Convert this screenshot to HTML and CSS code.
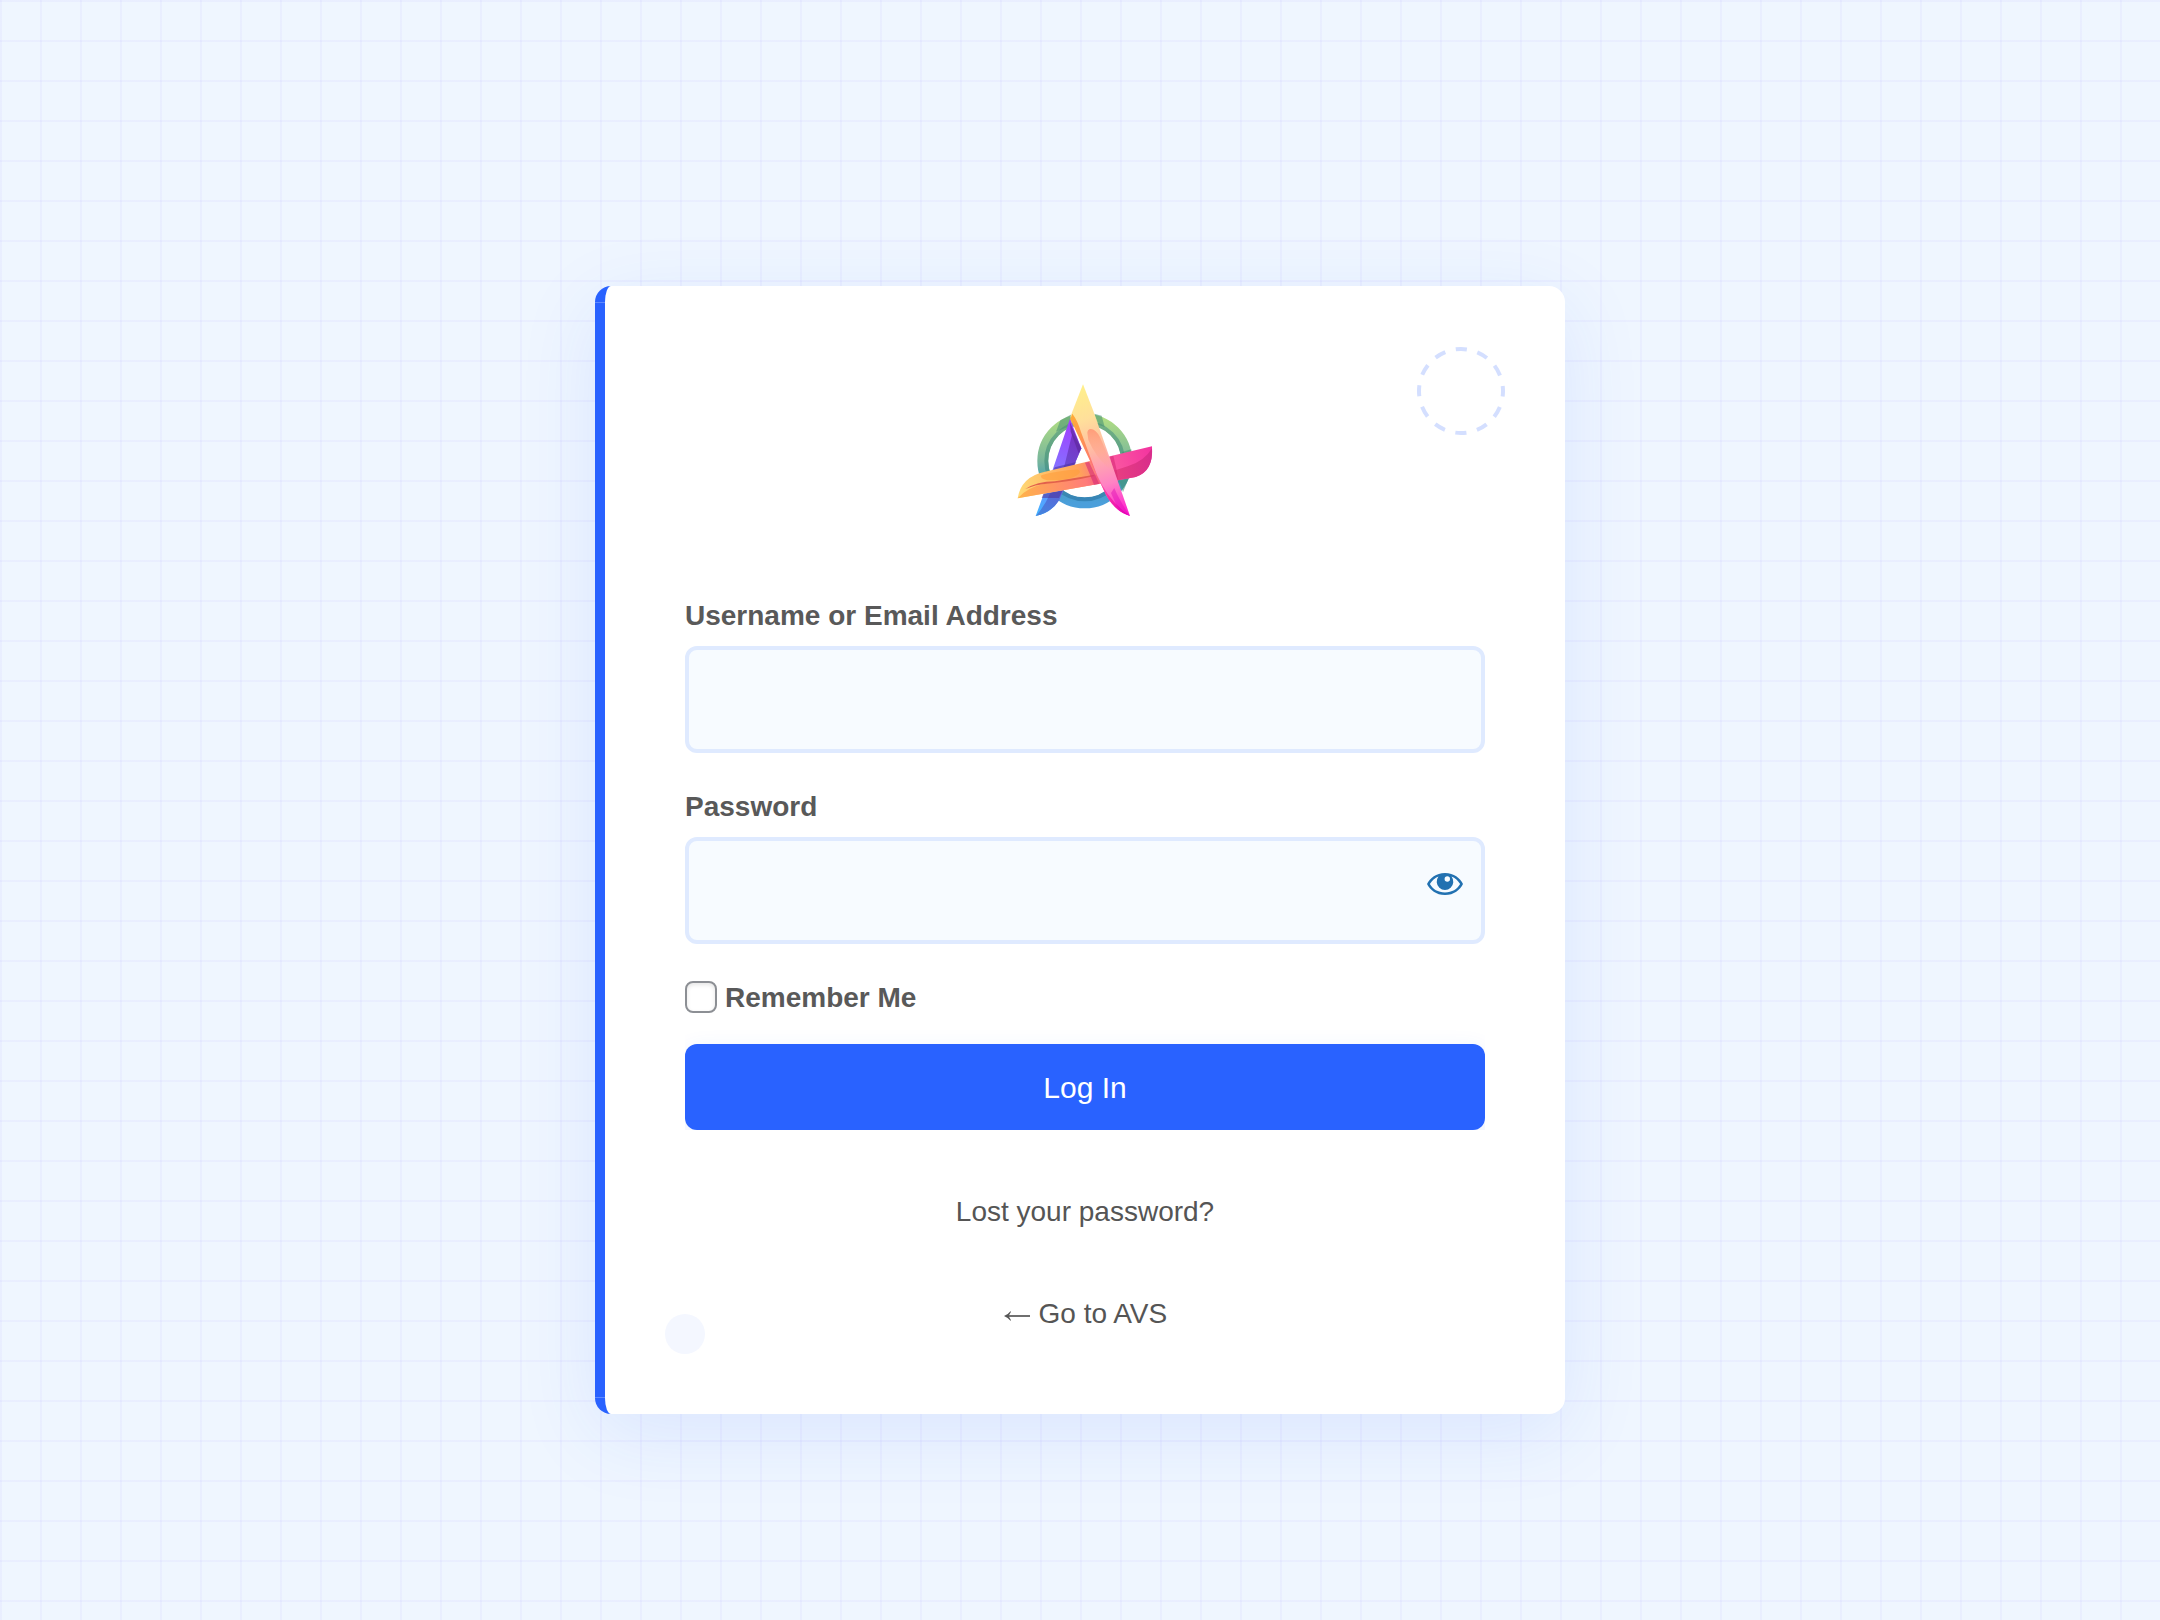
FILE: index.html
```html
<!DOCTYPE html>
<html lang="en">
<head>
<meta charset="utf-8">
<title>Log In</title>
<link rel="stylesheet" href="styles.css">
</head>
<body>
<main class="card">
  <span class="ring"><svg width="92" height="92" viewBox="0 0 92 92"><circle cx="46" cy="46" r="42" fill="none" stroke="#d4dfff" stroke-width="4" stroke-dasharray="11.2 10.791" stroke-dashoffset="5.6"/></svg></span>
  <span class="dot"></span>
  <h1 class="logo">
    <svg width="170" height="160" viewBox="0 0 510 480" role="img" aria-label="AVS">
      <defs>
        <linearGradient id="ring" x1="0" y1="0" x2="0" y2="1"><stop offset="0" stop-color="#afdc83"/><stop offset=".5" stop-color="#78b69c"/><stop offset=".75" stop-color="#439daf"/><stop offset="1" stop-color="#4b9fdb"/></linearGradient>
        <linearGradient id="ringDark" x1="0" y1="0" x2="0" y2="1"><stop offset="0" stop-color="#75b184"/><stop offset=".5" stop-color="#559d85"/><stop offset="1" stop-color="#3685b8"/></linearGradient>
        <linearGradient id="violet" gradientUnits="userSpaceOnUse" x1="215" y1="150" x2="120" y2="430"><stop offset="0" stop-color="#a33cff"/><stop offset=".5" stop-color="#8570ff"/><stop offset="1" stop-color="#44b3ff"/></linearGradient>
        <linearGradient id="violetDark" gradientUnits="userSpaceOnUse" x1="240" y1="190" x2="120" y2="430"><stop offset="0" stop-color="#7b2fc4"/><stop offset=".45" stop-color="#6a4ed2"/><stop offset="1" stop-color="#4583df"/></linearGradient>
        <linearGradient id="bar" gradientUnits="userSpaceOnUse" x1="60" y1="350" x2="455" y2="250"><stop offset="0" stop-color="#ffd875"/><stop offset=".45" stop-color="#ffa35a"/><stop offset=".7" stop-color="#fa57a0"/><stop offset="1" stop-color="#f334a0"/></linearGradient>
        <linearGradient id="barDark" gradientUnits="userSpaceOnUse" x1="55" y1="370" x2="455" y2="280"><stop offset="0" stop-color="#ffb34a"/><stop offset=".5" stop-color="#ff7c79"/><stop offset=".75" stop-color="#e63d82"/><stop offset="1" stop-color="#d92d8b"/></linearGradient>
        <linearGradient id="leg" gradientUnits="userSpaceOnUse" x1="245" y1="45" x2="380" y2="430"><stop offset="0" stop-color="#fff08a"/><stop offset=".25" stop-color="#ffdf9b"/><stop offset=".5" stop-color="#ffb7a5"/><stop offset=".75" stop-color="#ff83c4"/><stop offset="1" stop-color="#ff20d0"/></linearGradient>
        <linearGradient id="legDark" gradientUnits="userSpaceOnUse" x1="220" y1="140" x2="385" y2="437"><stop offset="0" stop-color="#ffaa39"/><stop offset=".4" stop-color="#ff7d69"/><stop offset=".7" stop-color="#fb3ea7"/><stop offset="1" stop-color="#e800b5"/></linearGradient>
        <linearGradient id="flare" x1="0" y1="0" x2="0" y2="1"><stop offset="0" stop-color="#ff9d79"/><stop offset="1" stop-color="#ffa493" stop-opacity="0"/></linearGradient>
      </defs>
      <circle cx="254" cy="273" r="126" fill="none" stroke="url(#ring)" stroke-width="32"/>
      <circle cx="254" cy="273" r="115" fill="none" stroke="url(#ringDark)" stroke-width="12"/>
      <path d="M181 151L215 133L205 170L168 185ZM283 131L305 137L314 171L296 165ZM366 246L394 238L396 254L366 260ZM357 332L386 325L369 367Z" fill="#438f73" opacity=".55"/>
      <path d="M210 146L244 235L178 390Q153 429 107 438L158 299Z" fill="url(#violet)"/>
      <path d="M217 190L244 235L178 390Q153 429 107 438Q132 412 153 365L194 284Z" fill="url(#violetDark)"/>
      <path d="M210 157L244 235L236 250L212 185Z" fill="#5f2ba0" opacity=".75"/>
      <path d="M164 292L229 276L222 289L157 306ZM130 372L187 362L177 384L125 384Z" fill="#4b319b" opacity=".55"/>
      <path d="M53 385Q63 320 135 305L456 229Q461 304 407 321L282 344Z" fill="url(#bar)"/>
      <path d="M53 385Q82 351 135 341L280 315L341 302L383 289Q433 274 456 235Q460 305 407 321L282 344Z" fill="url(#barDark)"/>
      <path d="M122 317Q145 306 222 299Q243 297 239 308Q222 330 157 331Q123 331 122 317Z" fill="#ff9e3c" opacity=".65"/>
      <path d="M76 357Q110 335 165 334L280 315L284 318Q205 336 140 341Q105 344 76 357Z" fill="#e2604c"/>
      <path d="M255 278L267 275L298 342L282 344ZM330 260L340 257L350 300L355 329L347 331Z" fill="#d72c76" opacity=".6"/>
      <path d="M249 43L280 123L390 438Q344 424 317 373L211 140Z" fill="url(#leg)"/>
      <path d="M217 131Q233 152 243 186L291 316Q326 394 390 438Q344 424 317 373L211 147Z" fill="url(#legDark)"/>
      <path d="M343 354Q358 391 390 438Q366 430 348 403L333 369Z" fill="#d900b1" opacity=".4"/>
      <path d="M262 188Q264 172 281 179Q295 186 306 215L343 306L320 290Q287 259 265 210Z" fill="url(#flare)"/>
    </svg>
  </h1>
  <form class="form">
    <label class="label" for="user">Username or Email Address</label>
    <input class="field" id="user" type="text">
    <label class="label" for="pass">Password</label>
    <div class="password">
      <input class="field" id="pass" type="password">
      <button class="reveal" type="button" aria-label="Show password"><svg width="36" height="22" viewBox="0 0 36 22"><path fill="#2271b1" fill-rule="evenodd" d="M18 0C27 0 33 5 36 11C33 17 27 22 18 22S3 17 0 11C3 5 9 0 18 0ZM11.500 3.500C8 5 4.800 7.700 2.900 11C5.800 16.200 11 19.400 18 19.400S30.200 16.200 33.100 11C31.200 7.700 28 5 24.500 3.500A8.300 8.300 0 1 1 11.500 3.500ZM20.300 3.300A2.700 2.700 0 1 0 20.300 8.700A2.700 2.700 0 1 0 20.300 3.300Z"/></svg></button>
    </div>
    <label class="remember"><input class="check" type="checkbox"><span>Remember Me</span></label>
    <div class="submit"><button class="button" type="button">Log In</button></div>
  </form>
  <a class="link">Lost your password?</a>
  <a class="link back"><svg class="arrow" width="28" height="12" viewBox="0 0 28 12" aria-hidden="true"><path d="M3 6H27" fill="none" stroke="#555" stroke-width="1.7"/><path d="M1 6Q5 4.500 7.500 1.200L8 1.700Q6.800 4 5.500 6Q6.800 8 8 10.300L7.500 10.800Q5 7.500 1 6Z" fill="#555"/></svg> Go to AVS</a>
</main>
</body>
</html>
```
FILE: styles.css
```css
* { box-sizing: border-box; }
body {
  margin: 0;
  height: 1620px;
  padding-top: 286px;
  overflow: hidden;
  font-family: "Liberation Sans", Arial, sans-serif;
  font-size: 28px;
  color: #555;
  background:
    linear-gradient(rgba(99, 80, 255, .045) 2px, transparent 2px) 0 0 / 40px 40px,
    linear-gradient(90deg, rgba(99, 80, 255, .045) 2px, transparent 2px) 0 0 / 40px 40px,
    #eff6ff;
}
.card {
  position: relative;
  display: flex;
  flex-direction: column;
  width: 970px;
  height: 1128px;
  margin: 0 auto;
  padding: 84px 80px 0;
  background: #fff;
  border-left: 10px solid #2962ff;
  border-radius: 16px;
  box-shadow: 0 20px 80px rgba(41, 90, 255, .1);
}
.card::before,
.card::after {
  content: "";
  position: absolute;
  left: -10px;
  width: 10px;
  height: 1px;
  background: #5e89ff;
}
.card::before { top: 16px; }
.card::after { bottom: 16px; }
.ring {
  position: absolute;
  top: 58.5px;
  right: 58px;
  width: 92px;
  height: 92px;
}
.ring svg, .logo svg, .reveal svg { display: block; }
.dot {
  position: absolute;
  left: 60px;
  bottom: 60px;
  width: 40px;
  height: 40px;
  border-radius: 50%;
  background: #f4f7ff;
}
.logo {
  display: flex;
  justify-content: center;
  margin: 0;
  height: 225px;
}
.form { display: flex; flex-direction: column; }
.label, .remember { font-weight: 700; line-height: 42px; color: #595959; }
.field {
  display: block;
  width: 100%;
  height: 107px;
  margin: 9px 0 33px;
  padding: 0 20px;
  border: 4px solid #dfeaff;
  border-radius: 12px;
  background: #f7fbff;
  font: inherit;
}
.password { display: flow-root; position: relative; }
.reveal {
  position: absolute;
  top: 45px;
  right: 22px;
  padding: 0;
  border: 0;
  background: none;
}
.remember {
  display: flex;
  align-items: center;
  gap: 8px;
  height: 42px;
}
.check {
  appearance: none;
  width: 32px;
  height: 32px;
  margin: 0 0 2px;
  border: 2px solid #8c8f94;
  border-radius: 8px;
  background: #fff;
  box-shadow: inset 0 2px 4px rgba(0, 0, 0, .1);
}
.submit { overflow: hidden; padding-top: 25px; margin-bottom: 1px; }
.button {
  display: block;
  width: 100%;
  height: 86px;
  padding: 2px 0 0;
  border: 0;
  border-radius: 12px;
  background: #2962ff;
  box-shadow: 0 8px 24px rgba(41, 98, 255, .12);
  color: #fff;
  font: 30px "Liberation Sans", Arial, sans-serif;
}
.link { margin-top: 60px; text-align: center; line-height: 42px; }
.arrow { vertical-align: 1px; }
```
